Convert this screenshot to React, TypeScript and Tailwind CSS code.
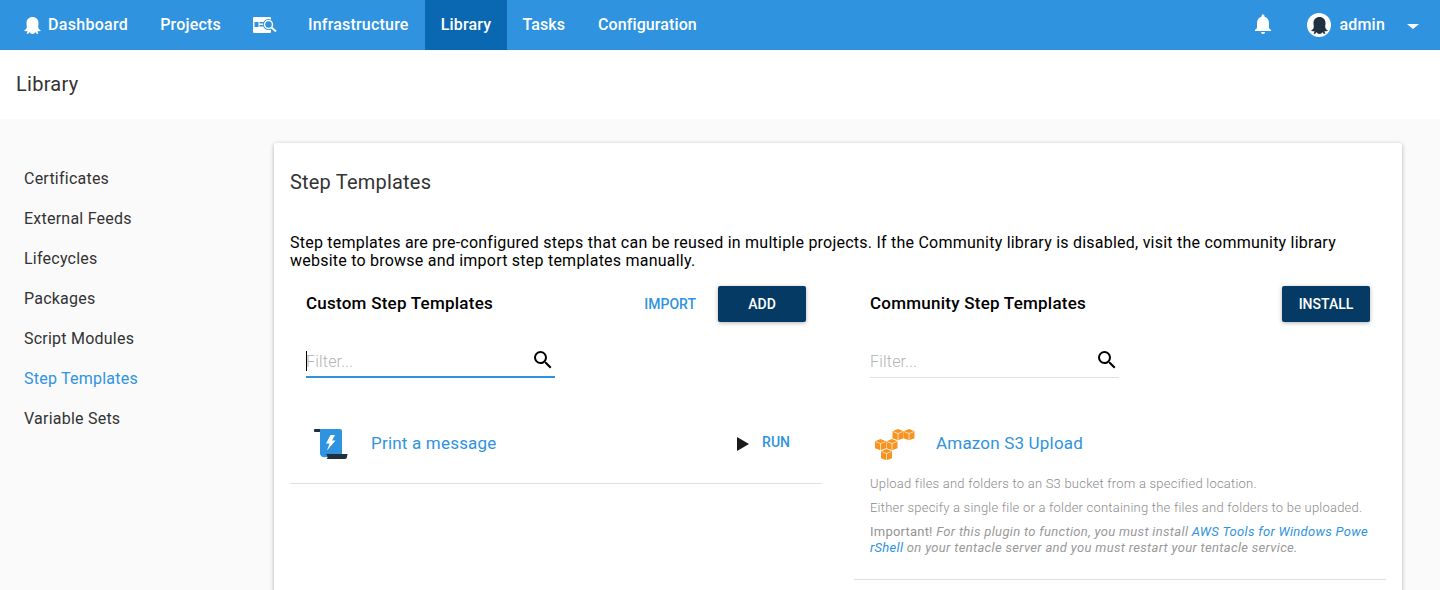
import React from "react";

const Octo = ({ className, fill }: { className?: string; fill: string }) => (
  <svg viewBox="0 0 17 17" className={className} fill={fill}>
    <path d="M8.500 0C12 0 14.500 2.500 14.500 6C14.500 8 14 9 14.300 10.500C14.500 12 16 13 17 13.500C16 14.500 14.500 14.300 13.500 14C13.500 15 14 16 14.500 17C13 17 11.800 16 11.300 15C11 16 10 17 8.500 17C7 17 6 16 5.700 15C5.200 16 4 17 2.500 17C3 16 3.500 15 3.500 14C2.500 14.300 1 14.500 0 13.500C1 13 2.500 12 2.700 10.500C3 9 2.500 8 2.500 6C2.500 2.500 5 0 8.500 0Z" />
  </svg>
);

const NavItem = ({ label, className }: { label: string; className?: string }) => (
  <div className={`h-[50px] px-4 flex items-center text-white text-[16px] font-medium ${className ?? "tracking-[0.2px]"}`}>
    {label}
  </div>
);

const SearchIcon = () => (
  <svg viewBox="0 0 24 24" className="w-6 h-6" fill="#000">
    <path d="M15.500 14h-.79l-.28-.27A6.470 6.470 0 0 0 16 9.500 6.500 6.500 0 1 0 9.500 16c1.610 0 3.090-.59 4.230-1.570l.27.28v.79l5 4.990L20.490 19l-4.990-5zm-6 0C7.010 14 5 11.990 5 9.500S7.010 5 9.500 5 14 7.010 14 9.500 11.990 14 9.500 14z" />
  </svg>
);

const Cube = ({ x, y }: { x: number; y: number }) => (
  <g transform={`translate(${x} ${y}) scale(1.100)`}>
    <path d="M0 2 5 0l5 2v6.300L5 10.300 0 8.300z" fill="#f7931e" />
    <path d="M0.600 2.400 5 4.100l4.400-1.700M5 4.100v6" fill="none" stroke="#fff" strokeWidth="0.600" />
  </g>
);

const FilterBox = ({ focused }: { focused?: boolean }) => (
  <div className={`relative w-[249px] h-[33px] flex items-center ${focused ? "border-b-2 border-[#2f93e0]" : "border-b border-[#e0e0e0]"}`}>
    {focused && <span className="absolute left-0 top-[6px] h-[20px] w-px bg-black" />}
    <span className="text-[16px] text-[#b3b3b3] font-light tracking-[0.2px] pt-[2px]">Filter...</span>
    <span className="absolute right-0 top-[3px]"><SearchIcon /></span>
  </div>
);

const SideItem = ({ label, active }: { label: string; active?: boolean }) => (
  <div className={`h-10 flex items-center text-[16px] tracking-[0.23px] ${active ? "text-[#2f93e0]" : "text-[#333333]"}`}>{label}</div>
);

export default function App() {
  return (
    <div className="h-[590px] overflow-hidden bg-[#fafafa] flex flex-col" style={{ fontFamily: "Roboto, sans-serif" }}>
      <header className="h-[50px] shrink-0 bg-[#2f93e0] flex items-center justify-between">
        <div className="flex items-center pl-2">
          <div className="h-[50px] pl-[16px] pr-4 flex items-center text-white text-[16px] font-medium tracking-[0.3px] gap-[7px]">
            <Octo className="w-[17px] h-[17px]" fill="#fff" />
            Dashboard
          </div>
          <NavItem label="Projects" />
          <div className="h-[50px] pl-[16px] pr-[15px] flex items-center">
            <svg viewBox="0 0 24 18" className="w-6 h-[18px]">
              <rect x="0" y="1" width="18" height="16" rx="1" fill="#fff" />
              <rect x="1.500" y="6" width="4" height="5" fill="#2f93e0" />
              <path d="M6.500 6h5v1.500h-5zM6.500 9h4v1.500h-4z" fill="#2f93e0" />
              <circle cx="15.500" cy="8.500" r="5.500" fill="#2f93e0" />
              <circle cx="15.500" cy="8.500" r="4" fill="none" stroke="#fff" strokeWidth="1.500" />
              <path d="M18.500 11.500l4.500 4" stroke="#fff" strokeWidth="2" />
            </svg>
          </div>
          <NavItem label="Infrastructure" />
          <NavItem label="Library" className="tracking-[0.2px] bg-[#0a67b1]" />
          <NavItem label="Tasks" className="tracking-[0.1px] -ml-px" />
          <NavItem label="Configuration" className="tracking-[0.1px] ml-px" />
        </div>
        <div className="flex items-center pr-[21px]">
          <svg viewBox="0 0 24 24" className="w-6 h-6 mr-[32px] -mt-[2px]" fill="#fff">
            <path d="M12 22c1.100 0 2-.9 2-2h-4c0 1.100.9 2 2 2zm6-6v-5c0-3.070-1.640-5.640-4.500-6.320V4c0-.83-.67-1.500-1.500-1.500s-1.500.67-1.500 1.500v.68C7.630 5.360 6 7.920 6 11v5l-2 2v1h16v-1l-2-2z" />
          </svg>
          <div className="w-6 h-6 rounded-full bg-white flex items-center justify-center mr-[8px]">
            <Octo className="w-[17px] h-[17px]" fill="#1f303f" />
          </div>
          <span className="text-white text-[16px] font-medium tracking-[0.2px]">admin</span>
          <span className="ml-[22px] w-0 h-0 border-x-[6px] border-x-transparent border-t-[5px] border-t-white mt-[2px]" />
        </div>
      </header>

      <div className="h-[69px] shrink-0 bg-white flex items-center px-4 pb-[2px] text-[20px] tracking-[0.28px] text-[#333333]">Library</div>

      <div className="flex flex-1 min-h-0">
        <aside className="w-[274px] shrink-0 pl-6 pt-[40px]">
          <SideItem label="Certificates" />
          <SideItem label="External Feeds" />
          <SideItem label="Lifecycles" />
          <SideItem label="Packages" />
          <SideItem label="Script Modules" />
          <SideItem label="Step Templates" active />
          <SideItem label="Variable Sets" />
        </aside>

        <main className="w-[1128px] mt-6 bg-white rounded-[2px] shadow-[0_1px_4px_rgba(0,0,0,0.3)] px-4 h-[500px]">
          <h1 className="text-[20px] text-[#333333] tracking-[0.2px] pt-[24px] leading-[30px]">Step Templates</h1>
          <p className="text-[16px] leading-[18px] tracking-[0.23px] text-black mt-[37px]">
            Step templates are pre-configured steps that can be reused in multiple projects. If the Community library is disabled, visit the community library website to browse and import step templates manually.
          </p>
          <div className="flex mt-[16px] gap-[32px]">
            <section className="w-[533px]">
              <div className="flex items-center h-[36px] pl-4 pr-4">
                <h2 className="text-[17px] font-medium text-black tracking-[0.24px] flex-1">Custom Step Templates</h2>
                <span className="text-[14px] font-medium text-[#2f93e0] mr-[22px]">IMPORT</span>
                <button className="w-[88px] h-[36px] bg-[#053a64] rounded-[2px] text-white text-[14px] font-medium shadow-[0_1px_4px_rgba(0,0,0,0.3)]">ADD</button>
              </div>
              <div className="pl-4 mt-[23px]"><FilterBox focused /></div>
              <div className="h-[106px] border-b border-[#e0e0e0] flex items-center pt-[27px] pl-[24px] pr-[32px]">
                <svg viewBox="0 0 34 32" className="w-[34px] h-[32px]">
                  <path d="M0 2a1 1 0 0 1 1-1h6v3H1a1 1 0 0 1-1-1z" fill="#1f303f" />
                  <path d="M6 1h20a2 2 0 0 1 2 2v26H12a5 5 0 0 1-6-3z" fill="#2f93e0" />
                  <path d="M12 26h21.500l-.5 3a2 2 0 0 1-2 2H12c2 0 2-3 0-5z" fill="#1f303f" />
                  <path d="M16.500 7H21l-3 5.500h3.500L13 22.500l2.500-7H12z" fill="#fff" />
                </svg>
                <span className="ml-[23px] text-[17px] tracking-[0.2px] text-[#2f93e0] flex-1">Print a message</span>
                <svg viewBox="0 0 12 14" className="w-3 h-[14px] mr-[13px]"><path d="M0 0l12 7-12 7z" fill="#1a1a1a" /></svg>
                <span className="text-[14px] font-medium text-[#2f93e0] -mt-[4px]">RUN</span>
              </div>
            </section>
            <section className="w-[533px]">
              <div className="flex items-center h-[36px] pl-4 pr-4">
                <h2 className="text-[17px] font-medium text-black tracking-[0.24px] flex-1">Community Step Templates</h2>
                <button className="w-[88px] h-[36px] bg-[#053a64] rounded-[2px] text-white text-[14px] font-medium shadow-[0_1px_4px_rgba(0,0,0,0.3)]">INSTALL</button>
              </div>
              <div className="pl-4 mt-[23px]"><FilterBox /></div>
              <div className="h-[202px] border-b border-[#e0e0e0] pl-4 pr-4">
                <div className="flex items-center h-[82px] pt-[50px]">
                  <svg viewBox="0 0 40 31" className="w-[40px] h-[31px] ml-[5px]">
                    <Cube x={17.500} y={0} />
                    <Cube x={28.500} y={0} />
                    <Cube x={0} y={10} />
                    <Cube x={11.500} y={10} />
                    <Cube x={6} y={20} />
                  </svg>
                  <span className="ml-[21px] text-[17px] tracking-[0.19px] text-[#2f93e0]">Amazon S3 Upload</span>
                </div>
                <div className="text-[13px] leading-[16px] font-light text-[#8c8c8c] mt-[16px] tracking-[0.22px]">
                  <p>Upload files and folders to an S3 bucket from a specified location.</p>
                  <p className="mt-[8px]">Either specify a single file or a folder containing the files and folders to be uploaded.</p>
                  <p className="mt-[8px] break-all">
                    <span className="font-normal text-[#949494]">Important! </span>
                    <em className="font-normal text-[#999999] tracking-[0.32px]">For this plugin to function, you must install <span className="text-[#2f93e0] tracking-[0.3px]">AWS Tools for Windows PowerShell</span> on your tentacle server and you must restart your tentacle service.</em>
                  </p>
                </div>
              </div>
            </section>
          </div>
        </main>
      </div>
    </div>
  );
}
